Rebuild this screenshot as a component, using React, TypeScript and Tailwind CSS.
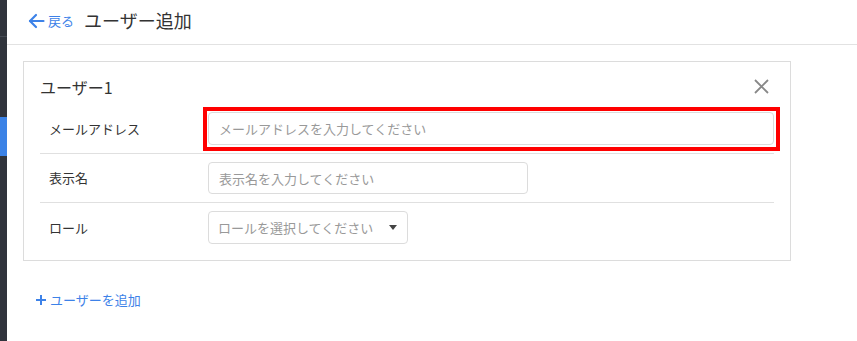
const FONT = { fontFamily: '"Noto Sans CJK JP", "Noto Sans", sans-serif' }

function Row({ label, children, last }: { label: string; children: React.ReactNode; last?: boolean }) {
    return (
        <div className={`flex items-center h-[49px] ${last ? "" : "border-b border-[#e0e0e0]"}`}>
            <div className="w-[168px] pl-[9px] text-[13px] text-[#333]">{label}</div>
            {children}
        </div>
    )
}

export default function App() {
    return (
        <div className="flex w-[857px] h-[341px] bg-white overflow-hidden" style={FONT}>
            <div className="w-[7px] h-full bg-[#30343c] flex flex-col">
                <div className="h-[36px]" />
                <div className="h-px bg-[#454a53]" />
                <div className="h-[80px]" />
                <div className="h-[39px] bg-[#3b82e6]" />
            </div>

            <div className="flex-1 flex flex-col">
                <div className="h-[45px] border-b border-[#e2e2e2] flex items-center pl-[21px] pb-[3px]">
                    <button className="flex items-center gap-[3px] text-[#3d82e8] text-[13px]">
                        <svg width="17" height="16" viewBox="0 0 17 16" fill="none" stroke="#3d82e8" strokeWidth="2.2" strokeLinecap="round" strokeLinejoin="round">
                            <path d="M15.5 8H2" />
                            <path d="M8 2L2 8L8 14" />
                        </svg>
                        <span>戻る</span>
                    </button>
                    <h1 className="ml-[10px] text-[18px] text-[#333]">ユーザー追加</h1>
                </div>

                <div className="pl-[16px] pt-[16px]">
                    <div className="w-[768px] border border-[#dcdcdc] px-[16px] pb-[8px]">
                        <div className="h-[43px] flex items-center justify-between">
                            <div className="text-[16px] text-[#333] pt-[7px]">ユーザー1</div>
                            <svg className="mr-[5px] mt-[6px]" width="15" height="15" viewBox="0 0 15 15" stroke="#888" strokeWidth="1.8">
                                <path d="M1 1L14 14M14 1L1 14" />
                            </svg>
                        </div>
                        <Row label="メールアドレス">
                            <div className="flex-1 ml-[-5px] mr-[-6px] border-4 border-[#ff0000] pl-px pr-[2px] pt-px pb-[2px] flex">
                                <input
                                    className="flex-1 h-[33px] border border-[#dcdcdc] rounded-[4px] px-[10px] text-[13px] placeholder:text-[#999] outline-none"
                                    placeholder="メールアドレスを入力してください"
                                />
                            </div>
                        </Row>
                        <Row label="表示名">
                            <input
                                className="w-[320px] h-[32px] border border-[#dcdcdc] rounded-[4px] px-[10px] text-[13px] placeholder:text-[#999] outline-none"
                                placeholder="表示名を入力してください"
                            />
                        </Row>
                        <Row label="ロール" last>
                            <div className="w-[200px] h-[33px] border border-[#dcdcdc] rounded-[4px] pl-[9px] pr-[10px] flex items-center justify-between text-[13px] text-[#999]">
                                <span>ロールを選択してください</span>
                                <svg width="8" height="5" viewBox="0 0 8 5">
                                    <path d="M0 0H8L4 5Z" fill="#444" />
                                </svg>
                            </div>
                        </Row>
                    </div>
                </div>

                <button className="mt-[29px] ml-[29px] flex items-center gap-[4px] text-[13px] text-[#3d82e8] self-start">
                    <svg width="10" height="10" viewBox="0 0 10 10" stroke="#3d82e8" strokeWidth="2">
                        <path d="M5 0V10M0 5H10" />
                    </svg>
                    <span>ユーザーを追加</span>
                </button>
            </div>
        </div>
    )
}
